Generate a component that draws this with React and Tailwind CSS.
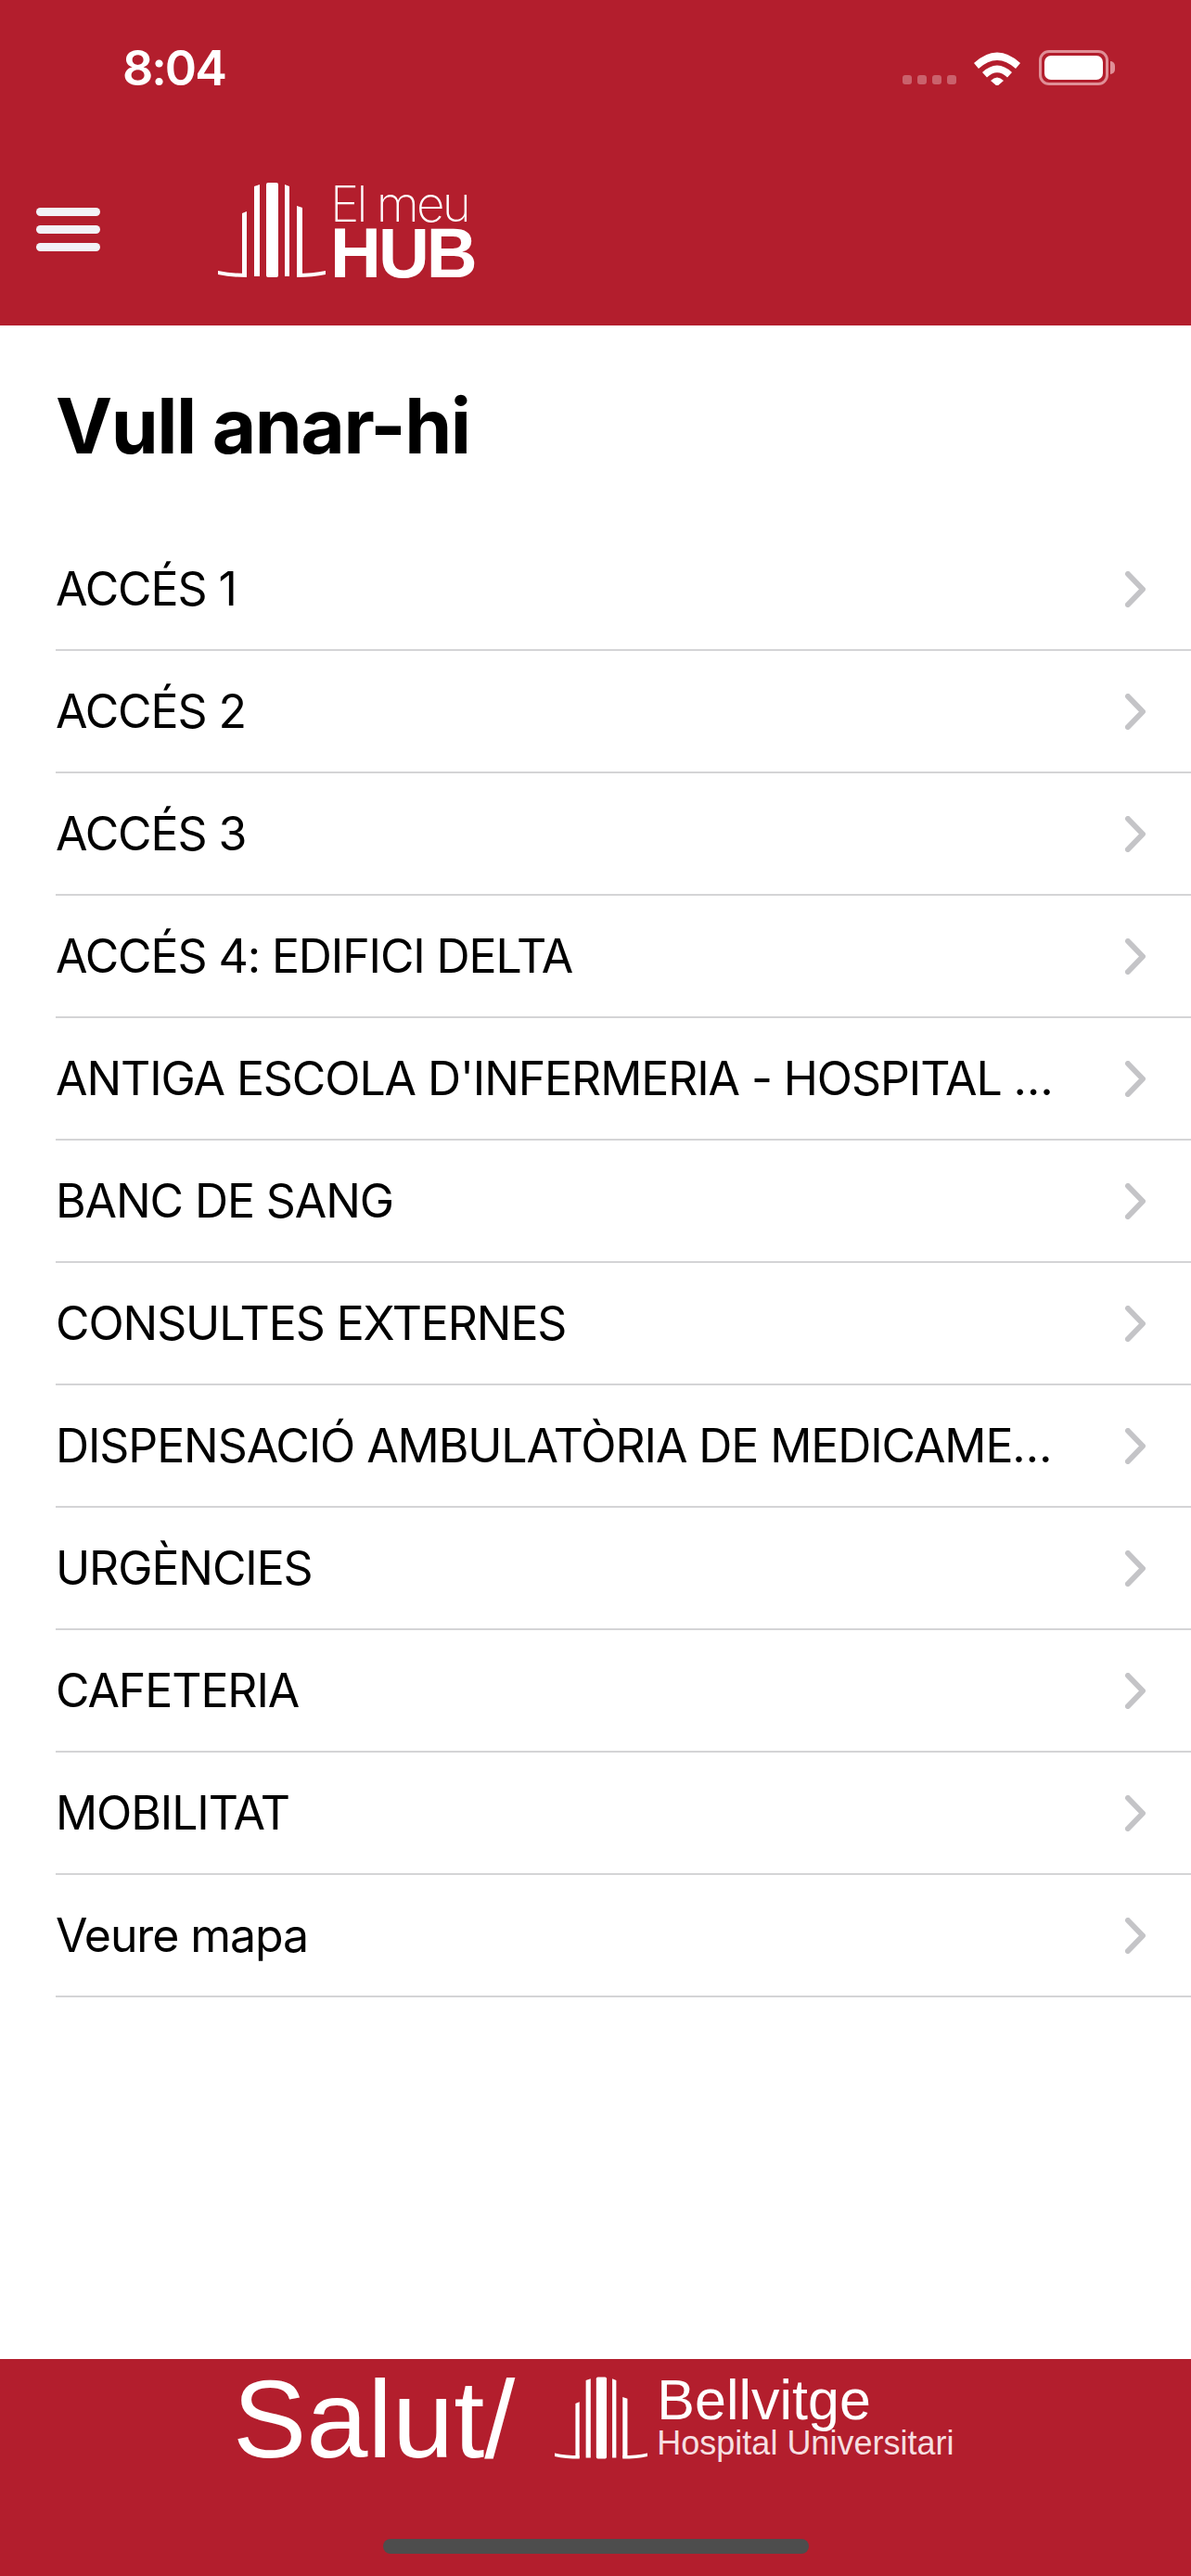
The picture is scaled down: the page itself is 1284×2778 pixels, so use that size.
const items = [
  "ACCÉS 1",
  "ACCÉS 2",
  "ACCÉS 3",
  "ACCÉS 4: EDIFICI DELTA",
  "ANTIGA ESCOLA D'INFERMERIA - HOSPITAL …",
  "BANC DE SANG",
  "CONSULTES EXTERNES",
  "DISPENSACIÓ AMBULATÒRIA DE MEDICAME…",
  "URGÈNCIES",
  "CAFETERIA",
  "MOBILITAT",
  "Veure mapa",
];

// building mark used in both logos, drawn in header pixel units
function BuildingMark({ className }) {
  return (
    <svg viewBox="0 0 116 102" className={className} fill="#fff">
      <path d="M26 33 L31 31 V101 H26 Z" />
      <path d="M39 4 L45 2 V101 H39 Z" />
      <rect x="52" y="0" width="13" height="102" rx="2" />
      <path d="M72 2 L77 4 V101 H72 Z" />
      <path d="M85 25 L91 27 V101 H85 Z" />
      <path d="M0 95 Q14 98 31 98 V102 Q14 102 0 99 Z" />
      <path d="M85 98 Q102 98 116 95 V99 Q102 102 85 102 Z" />
    </svg>
  );
}

function StatusBar() {
  return (
    <div className="h-[146px] flex items-start justify-between pt-[47px] pl-[132px] pr-[82px]">
      <span className="text-[52px] leading-[54px] tracking-[-2px] font-semibold text-white font-['Inter',sans-serif]">8:04</span>
      <div className="flex items-start mt-[7px]">
        <div className="flex gap-[6px] mt-[27px] mr-[19px] opacity-30">
          <div className="w-[10px] h-[10px] rounded-[3px] bg-white" />
          <div className="w-[10px] h-[10px] rounded-[3px] bg-white" />
          <div className="w-[10px] h-[10px] rounded-[3px] bg-white" />
          <div className="w-[10px] h-[10px] rounded-[3px] bg-white" />
        </div>
        <svg viewBox="0 0 50 38" className="w-[50px] h-[38px] mr-[20px]" fill="#fff">
          <path d="M0 14 Q25 -9 50 14 L45 20 Q25 2 5 20 Z" />
          <path d="M9 24 Q25 9 41 24 L36 29.5 Q25 19 14 29.5 Z" />
          <path d="M18 33 Q25 26 32 33 L25 39 Z" />
        </svg>
        <div className="w-[75px] h-[38px] rounded-[11px] border-[3px] border-[#e08f97] p-[3px]">
          <div className="w-full h-full rounded-[7px] bg-white" />
        </div>
        <div className="w-[5px] h-[14px] mt-[12px] ml-[2px] rounded-r-full bg-[#e08f97]" />
      </div>
    </div>
  );
}

function Header() {
  return (
    <div className="h-[351px] bg-[#b31e2d]">
      <StatusBar />
      <div className="flex items-start pl-[39px] pt-[51px]">
        <div className="flex flex-col gap-[10px] w-[69px] mt-[27px]">
          <div className="h-[9px] rounded-full bg-[#f2f2f7]" />
          <div className="h-[9px] rounded-full bg-[#f2f2f7]" />
          <div className="h-[9px] rounded-full bg-[#f2f2f7]" />
        </div>
        <BuildingMark className="w-[116px] h-[102px] ml-[127px]" />
        <div className="ml-[5px] text-white font-['Liberation_Sans',sans-serif]">
          <div className="text-[53px] leading-[46px] tracking-[-2.8px] font-['Inter',sans-serif] font-extralight">El meu</div>
          <div className="text-[76px] leading-[60px] tracking-[-3px] font-bold">HUB</div>
        </div>
      </div>
    </div>
  );
}

function Footer() {
  return (
    <div className="relative h-[234px] bg-[#b31e2d] text-white font-['Liberation_Sans',sans-serif]">
      <div className="flex items-start pl-[251px] pt-[10px]">
        <span className="text-[119px] leading-[110px]">Salut/</span>
        <BuildingMark className="w-[100px] h-[89px] ml-[43px] mt-[9px]" />
        <div className="ml-[10px] mt-[6px]">
          <div className="text-[61px] leading-[56px]">Bellvitge</div>
          <div className="text-[36px] leading-[38px] text-[#f6dfe1]">Hospital Universitari</div>
        </div>
      </div>
      <div className="absolute left-[413px] bottom-[24px] w-[459px] h-[16px] rounded-full bg-[#4d4d4d]" />
    </div>
  );
}

export default function App() {
  return (
    <div className="w-[1284px] h-[2778px] flex flex-col bg-white font-['Inter',sans-serif]">
      <Header />
      <div className="flex-1">
        <h1 className="h-[219px] pl-[60px] pt-[59px] text-[82px] leading-[100px] tracking-[-1.5px] font-bold text-black">Vull anar-hi</h1>
        <div className="pl-[60px]">
          {items.map((item) => (
            <div key={item} className="h-[132px] flex items-center justify-between border-b-2 border-[#d4d4d6] pr-[49px]">
              <span className="text-[50px] tracking-[-1.1px] text-black whitespace-nowrap">{item}</span>
              <svg viewBox="0 0 22 39" className="w-[22px] h-[39px]" fill="none" stroke="#c4c4c7" strokeWidth="6" strokeLinecap="round" strokeLinejoin="round">
                <path d="M3 3 L19 19.5 L3 36" />
              </svg>
            </div>
          ))}
        </div>
      </div>
      <Footer />
    </div>
  );
}
